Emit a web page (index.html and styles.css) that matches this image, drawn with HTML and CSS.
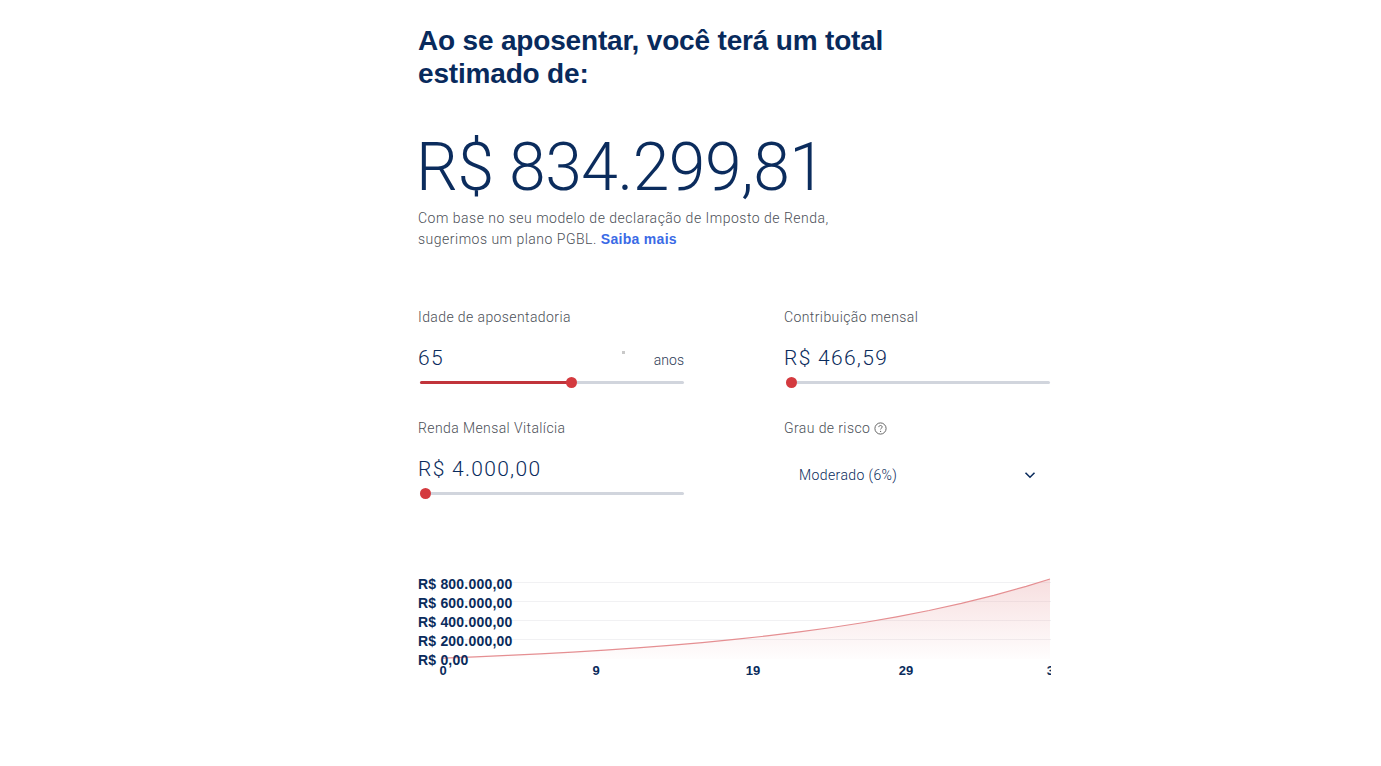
FILE: index.html
```html
<!DOCTYPE html>
<html lang="pt-BR">
<head>
<meta charset="utf-8">
<title>Simulador de aposentadoria</title>
<link rel="stylesheet" href="styles.css">
</head>
<body>
<main class="sim">
  <h1 class="title">Ao se aposentar, você terá um total estimado de:</h1>
  <div class="total">R$ 834.299,81</div>
  <p class="note">Com base no seu modelo de declaração de Imposto de Renda, sugerimos um plano PGBL. <a class="link" href="#">Saiba mais</a></p>

  <section class="fields">
    <div class="field">
      <div class="label">Idade de aposentadoria</div>
      <div class="value-row">
        <span class="value">65</span>
        <span class="spin"></span>
        <span class="unit">anos</span>
      </div>
      <div class="track"><div class="fill" style="width:57.5%"></div><span class="thumb" style="left:57.5%"></span></div>
    </div>
    <div class="field">
      <div class="label">Contribuição mensal</div>
      <div class="value-row"><span class="value">R$ 466,59</span></div>
      <div class="track"><span class="thumb" style="left:2%"></span></div>
    </div>
    <div class="field">
      <div class="label">Renda Mensal Vitalícia</div>
      <div class="value-row"><span class="value">R$ 4.000,00</span></div>
      <div class="track"><span class="thumb" style="left:2%"></span></div>
    </div>
    <div class="field">
      <div class="label">Grau de risco
        <svg class="help" width="13" height="13" viewBox="0 0 13 13"><circle cx="6.5" cy="6.5" r="5.6" fill="none" stroke="#666" stroke-width="1"/><path d="M4.8 5.1c0-1 .8-1.6 1.7-1.6s1.7.6 1.7 1.5c0 1.2-1.6 1.2-1.6 2.4" fill="none" stroke="#666" stroke-width="1"/><circle cx="6.6" cy="9.4" r=".6" fill="#666"/></svg>
      </div>
      <div class="select">
        <span>Moderado (6%)</span>
        <svg width="12" height="8" viewBox="0 0 12 8"><path d="M1.5 1.8 6 6.2 10.5 1.8" fill="none" stroke="#0a2b5c" stroke-width="1.6"/></svg>
      </div>
    </div>
  </section>

  <div class="chart">
    <svg width="633" height="110" viewBox="0 0 633 110">
      <defs>
        <linearGradient id="area" x1="0" y1="0" x2="0" y2="1">
          <stop offset="0" stop-color="#e8a2a4" stop-opacity="0.35"/>
          <stop offset="1" stop-color="#e8a2a4" stop-opacity="0.02"/>
        </linearGradient>
      </defs>
      <g stroke="#f1f1f3" stroke-width="1">
        <line x1="25" y1="9.5" x2="633" y2="9.5"/>
        <line x1="25" y1="28.5" x2="633" y2="28.5"/>
        <line x1="25" y1="47.5" x2="633" y2="47.5"/>
        <line x1="25" y1="66.5" x2="633" y2="66.5"/>
      </g>
      <path d="M25 85.04 L57.4 83.8 L89.8 82.41 L122.2 80.85 L154.6 79.09 L187 77.11 L219.4 74.9 L251.8 72.4 L284.2 69.6 L316.6 66.46 L349 62.92 L381.4 58.95 L413.8 54.48 L446.2 49.47 L478.6 43.83 L511 37.5 L543.4 30.38 L575.8 22.39 L608.2 13.41 L632 5.95 L632 86 L25 86 Z" fill="url(#area)"/>
      <path d="M25 85.04 L57.4 83.8 L89.8 82.41 L122.2 80.85 L154.6 79.09 L187 77.11 L219.4 74.9 L251.8 72.4 L284.2 69.6 L316.6 66.46 L349 62.92 L381.4 58.95 L413.8 54.48 L446.2 49.47 L478.6 43.83 L511 37.5 L543.4 30.38 L575.8 22.39 L608.2 13.41 L632 5.95" fill="none" stroke="#e58f92" stroke-width="1.2"/>
      <g class="ylab">
        <text x="0" y="16">R$ 800.000,00</text>
        <text x="0" y="35">R$ 600.000,00</text>
        <text x="0" y="54">R$ 400.000,00</text>
        <text x="0" y="73">R$ 200.000,00</text>
        <text x="0" y="92">R$ 0,00</text>
      </g>
      <g class="xlab">
        <text x="25" y="102">0</text>
        <text x="178" y="102">9</text>
        <text x="335" y="102">19</text>
        <text x="488" y="102">29</text>
        <text x="636" y="102">38</text>
      </g>
    </svg>
  </div>
</main>
</body>
</html>
```

FILE: styles.css
```css
* { box-sizing: border-box; }
html, body { margin: 0; padding: 0; background: #fff; }
body {
  font-family: Roboto, "Liberation Sans", Arial, sans-serif;
  color: #0a2b5c;
}
.sim {
  width: 634px;
  margin-left: 418px;
  padding-top: 24px;
}
.title {
  margin: 0;
  width: 480px;
  font-family: "Liberation Sans", Arial, sans-serif;
  font-weight: 700;
  font-size: 28px;
  line-height: 33px;
  letter-spacing: -0.18px;
  color: #082a5c;
}
.total {
  margin-top: 38px;
  margin-left: -2px;
  font-weight: 300;
  font-size: 66px;
  line-height: 80px;
  letter-spacing: -0.5px;
  color: #0b2c5d;
}
.note {
  margin: 0;
  width: 460px;
  font-weight: 300;
  font-size: 14px;
  line-height: 21px;
  letter-spacing: 0.5px;
  color: #4b4f57;
}
.link {
  font-family: "Liberation Sans", Arial, sans-serif;
  font-weight: 700;
  letter-spacing: 0.3px;
  color: #3a6ae6;
  text-decoration: none;
}
.fields {
  margin-top: 58px;
  display: grid;
  grid-template-columns: 266px 266px;
  column-gap: 100px;
  row-gap: 35px;
}
.field { display: flex; flex-direction: column; }
.label {
  font-weight: 300;
  font-size: 14px;
  line-height: 18px;
  letter-spacing: 0.4px;
  color: #4b4f57;
  display: flex;
  align-items: center;
  gap: 4px;
}
.help { margin-top: 1px; }
.value-row {
  display: flex;
  align-items: baseline;
  margin-top: 18px;
  height: 28px;
}
.value {
  flex: 1;
  font-weight: 300;
  font-size: 21px;
  line-height: 28px;
  letter-spacing: 1.3px;
  color: #0a2b5c;
}
.spin {
  width: 3px;
  height: 3px;
  background: #c9c9c9;
  align-self: flex-start;
  margin: 7px 29px 0 0;
}
.unit {
  font-weight: 300;
  font-size: 14px;
  color: #2d3a55;
}
.track {
  position: relative;
  margin: 9px 0 0 2px;
  height: 3px;
  border-radius: 2px;
  background: #d1d5dd;
}
.fill {
  height: 3px;
  border-radius: 2px;
  background: #c1343b;
}
.thumb {
  position: absolute;
  top: 50%;
  width: 11px;
  height: 11px;
  margin: -5.5px 0 0 -5.5px;
  border-radius: 50%;
  background: #d43a3f;
}
.select {
  margin-top: 30px;
  display: flex;
  align-items: center;
  justify-content: space-between;
  padding: 0 14px 0 15px;
  font-weight: 300;
  font-size: 14px;
  letter-spacing: 0.4px;
  color: #0a2b5c;
}
.chart {
  margin-top: 78px;
  height: 110px;
}
.chart svg { display: block; overflow: hidden; }
.ylab text, .xlab text {
  font-family: "Liberation Sans", Arial, sans-serif;
  font-weight: 700;
  fill: #0a2b5c;
}
.ylab text { font-size: 14px; letter-spacing: 0.2px; }
.xlab text { font-size: 13px; text-anchor: middle; }
```
